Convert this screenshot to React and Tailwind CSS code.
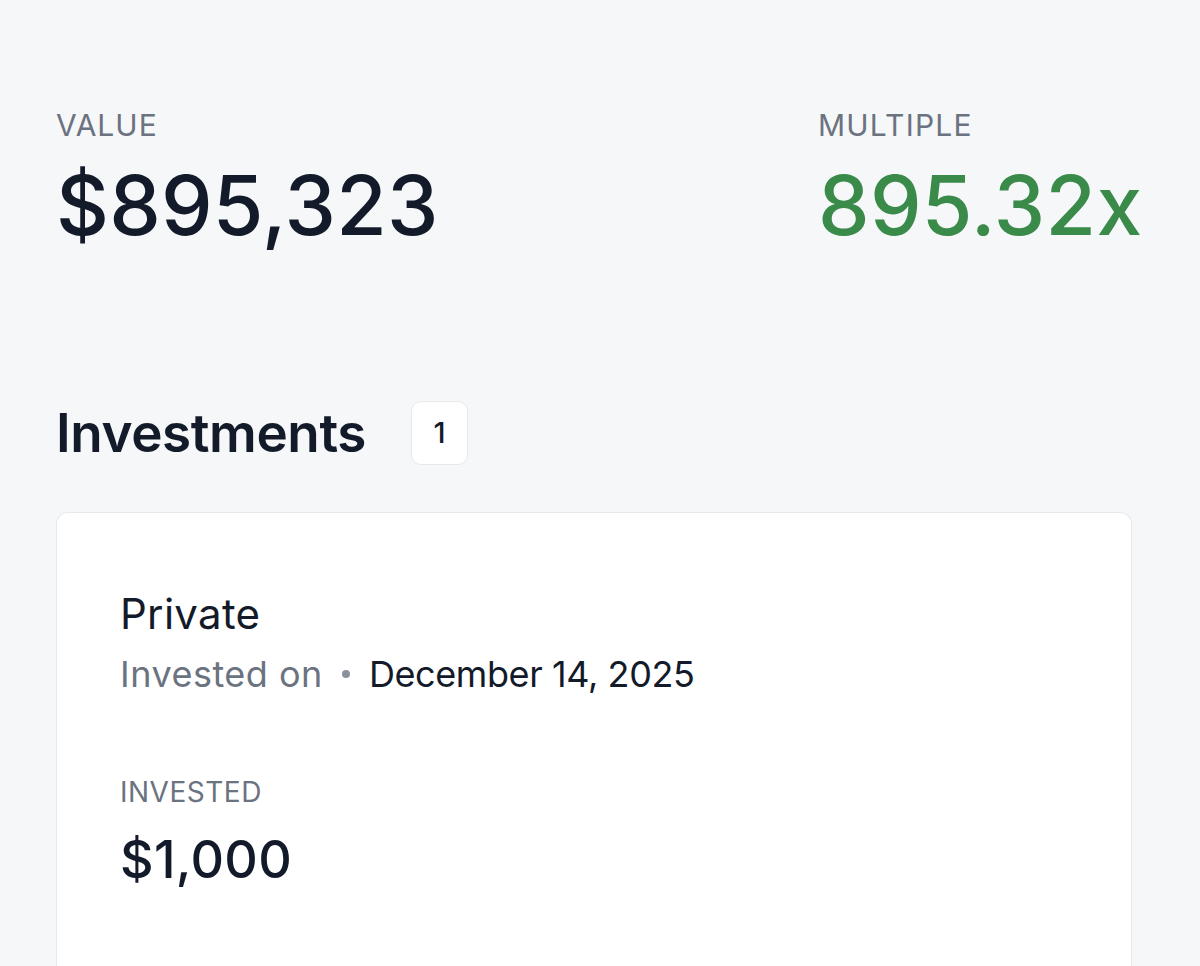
export default function App() {
  return (
    <div className="h-[966px] w-[1200px] overflow-hidden bg-[#f6f7f9] text-[#131a29]" style={{ fontFamily: "Inter, 'Noto Sans', sans-serif" }}>
      <div className="flex pl-[56px] pt-[107px]">
        <div className="w-[762px]">
          <div className="text-[30px] leading-[36px] tracking-[1px] text-[#6b7280]">VALUE</div>
          <div className="mt-[23px] text-[82px] font-medium leading-[80px] tracking-[0.2px]">$895,323</div>
        </div>
        <div>
          <div className="text-[30px] leading-[36px] tracking-[1.2px] text-[#6b7280]">MULTIPLE</div>
          <div className="mt-[23px] text-[82px] font-medium leading-[80px] tracking-[0.3px] text-[#3a8a4a]">895.32x</div>
        </div>
      </div>
      <div className="mt-[155px] flex items-center pl-[56px]">
        <h2 className="text-[53px] font-semibold leading-[60px] tracking-[-0.4px]">Investments</h2>
        <div className="ml-[45px] flex h-[64px] w-[57px] items-center justify-center rounded-[10px] border border-[#e6e8ec] bg-white text-[29px] font-medium">1</div>
      </div>
      <div className="ml-[56px] mt-[47px] w-[1076px] rounded-t-[12px] border border-b-0 border-[#e6e8ec] bg-white pb-[200px] pl-[63px] pt-[76px]">
        <div className="text-[42px] leading-[50px] tracking-[0.3px]">Private</div>
        <div className="mt-[13px] flex items-center text-[36px] leading-[44px]">
          <span className="tracking-[0.5px] text-[#6b7280]">Invested on</span>
          <span className="mx-[19px] h-[8px] w-[8px] rounded-full bg-[#8b919c]"></span>
          <span className="tracking-[-0.4px]">December 14, 2025</span>
        </div>
        <div className="mt-[79px] text-[28px] leading-[34px] tracking-[0.5px] text-[#6b7280]">INVESTED</div>
        <div className="mt-[21px] text-[52px] font-medium leading-[60px] tracking-[0.3px]">$1,000</div>
      </div>
    </div>
  );
}
